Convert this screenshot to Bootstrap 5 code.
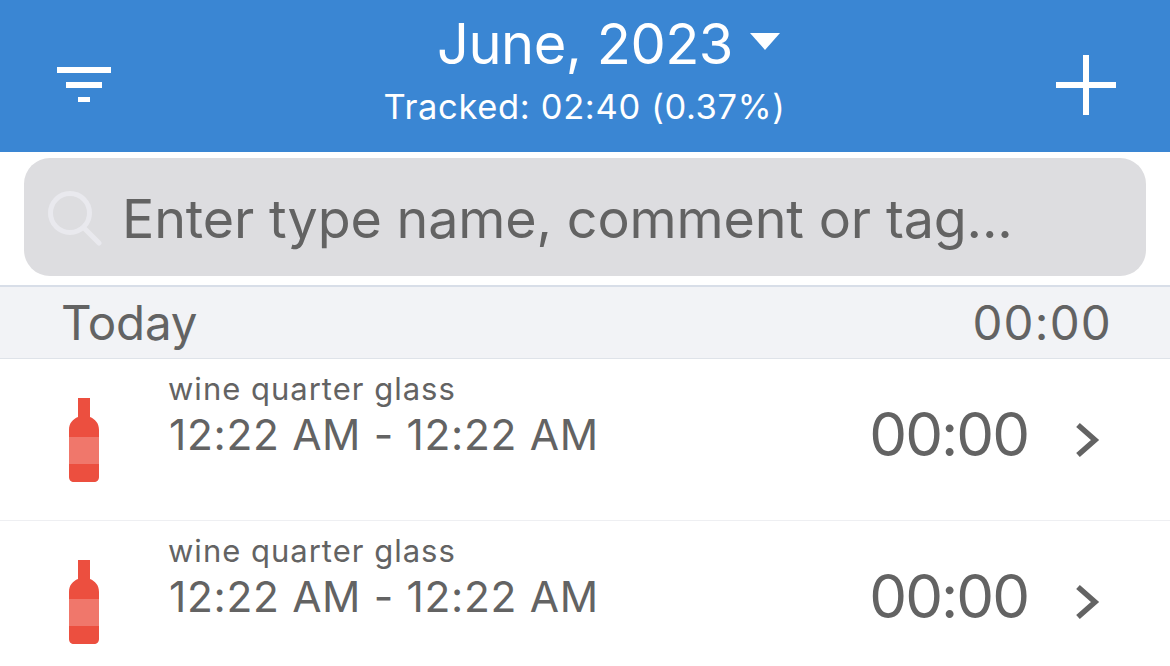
<!DOCTYPE html>
<html lang="en">
<head>
    <meta charset="UTF-8">
    <meta name="viewport" content="width=device-width, initial-scale=1.0">
    <title>Tracker</title>
    <link href="https://cdn.jsdelivr.net/npm/bootstrap@5.3.0/dist/css/bootstrap.min.css" rel="stylesheet">
    <script src="https://cdn.jsdelivr.net/npm/bootstrap@5.3.0/dist/js/bootstrap.bundle.min.js"></script>
    <style>
        html, body {
            height: 666px;
            overflow: hidden;
        }
        body {
            background-color: #fff;
            font-family: Inter, "Noto Sans", sans-serif;
            color: #636363;
        }
        .top-bar {
            height: 152px;
            background-color: #3a86d3;
            padding: 0 54px 0 57px;
        }
        .top-title {
            font-size: 56px;
            line-height: 68px;
            margin-top: 10px;
            padding-left: 44px;
            letter-spacing: -0.5px;
        }
        .top-sub {
            font-size: 34.5px;
            line-height: 40px;
            margin-top: 9px;
            padding-right: 4px;
            letter-spacing: 0.65px;
        }
        .caret-down {
            width: 0;
            height: 0;
            border-left: 15px solid transparent;
            border-right: 15px solid transparent;
            border-top: 17px solid #fff;
            margin-left: 17px;
            margin-top: -6px;
        }
        .top-icon {
            flex: 0 0 60px;
        }
        .filter-icon {
            margin-top: 22px;
        }
        .add-icon {
            margin-top: 18px;
        }
        .search-wrap {
            padding: 6px 24px 9px;
        }
        .search-box {
            height: 118px;
            background-color: #dddde0;
            border-radius: 26px;
            padding-left: 24px;
            gap: 18px;
            font-size: 53.8px;
            line-height: 64px;
            letter-spacing: -0.15px;
            white-space: nowrap;
        }
        .search-box span {
            margin-top: 4px;
        }
        .search-box svg {
            margin-top: 2px;
        }
        .day-head {
            height: 74px;
            background-color: #f2f3f6;
            border-top: 2px solid #d8dee8;
            border-bottom: 1px solid #dfe3e9;
            padding: 0 61px;
            font-size: 47.5px;
            letter-spacing: -0.2px;
        }
        .day-total {
            margin-right: -3px;
            letter-spacing: 1.2px;
        }
        .entry-row {
            height: 162px;
            border-bottom: 1px solid #eeeff2;
            padding-left: 69px;
        }
        .entry-text {
            margin-left: 69px;
            padding-top: 12px;
        }
        .entry-name {
            font-size: 31px;
            line-height: 36px;
            letter-spacing: 1px;
        }
        .entry-time {
            font-size: 42.5px;
            line-height: 52px;
            margin-top: 2px;
            margin-left: 1px;
            letter-spacing: 0.65px;
        }
        .entry-total {
            font-size: 60px;
            line-height: 72px;
            margin-right: 46px;
            margin-top: -12px;
            letter-spacing: -2px;
        }
        .entry-arrow {
            margin-right: 70px;
        }
    </style>
</head>
<body>
    <header class="top-bar d-flex justify-content-between align-items-center text-white">
        <svg class="top-icon filter-icon" width="60" height="40" viewBox="0 0 60 40">
            <rect x="0" y="0" width="54" height="6" fill="#fff"/>
            <rect x="9" y="15" width="36" height="6" fill="#fff"/>
            <rect x="21" y="30" width="12" height="5" fill="#fff"/>
        </svg>
        <div class="text-center flex-grow-1 align-self-start">
            <div class="top-title d-flex justify-content-center align-items-center">June, 2023<span class="caret-down"></span></div>
            <div class="top-sub">Tracked: 02:40 (0.37%)</div>
        </div>
        <svg class="top-icon add-icon" width="60" height="60" viewBox="0 0 60 60">
            <rect x="27" y="0" width="6" height="60" fill="#fff"/>
            <rect x="0" y="27" width="60" height="6" fill="#fff"/>
        </svg>
    </header>

    <div class="search-wrap">
        <div class="search-box d-flex align-items-center">
            <svg width="56" height="56" viewBox="0 0 56 56" fill="none" stroke="#e9e9ee" stroke-width="5" stroke-linecap="round">
                <circle cx="22" cy="23" r="19.5"/>
                <path d="M36 38l15 15"/>
            </svg>
            <span>Enter type name, comment or tag...</span>
        </div>
    </div>

    <div class="day-head d-flex justify-content-between align-items-center">
        <span>Today</span>
        <span class="day-total">00:00</span>
    </div>

    <div id="entries"></div>

    <script>
        const entries = [
            { name: 'wine quarter glass', time: '12:22 AM - 12:22 AM', total: '00:00' },
            { name: 'wine quarter glass', time: '12:22 AM - 12:22 AM', total: '00:00' }
        ];

        let content = '';
        entries.forEach(entry => {
            content += `
            <div class="entry-row d-flex align-items-center">
                <svg width="30" height="84" viewBox="0 0 30 84" class="flex-shrink-0">
                    <path d="M9 0h12v19c5 2 9 6 9 13v47c0 3-2 5-5 5H5c-3 0-5-2-5-5V32c0-7 4-11 9-13z" fill="#ec4f3f"/>
                    <rect x="0" y="39" width="30" height="27" fill="#f0776b"/>
                </svg>
                <div class="entry-text align-self-start flex-grow-1">
                    <div class="entry-name">${entry.name}</div>
                    <div class="entry-time">${entry.time}</div>
                </div>
                <div class="entry-total">${entry.total}</div>
                <svg class="entry-arrow" width="26" height="36" viewBox="0 0 26 36" fill="none" stroke="#636363" stroke-width="5.5">
                    <path d="M4 3l17 15L4 33"/>
                </svg>
            </div>`;
        });
        document.getElementById('entries').innerHTML = content;
    </script>
</body>
</html>
